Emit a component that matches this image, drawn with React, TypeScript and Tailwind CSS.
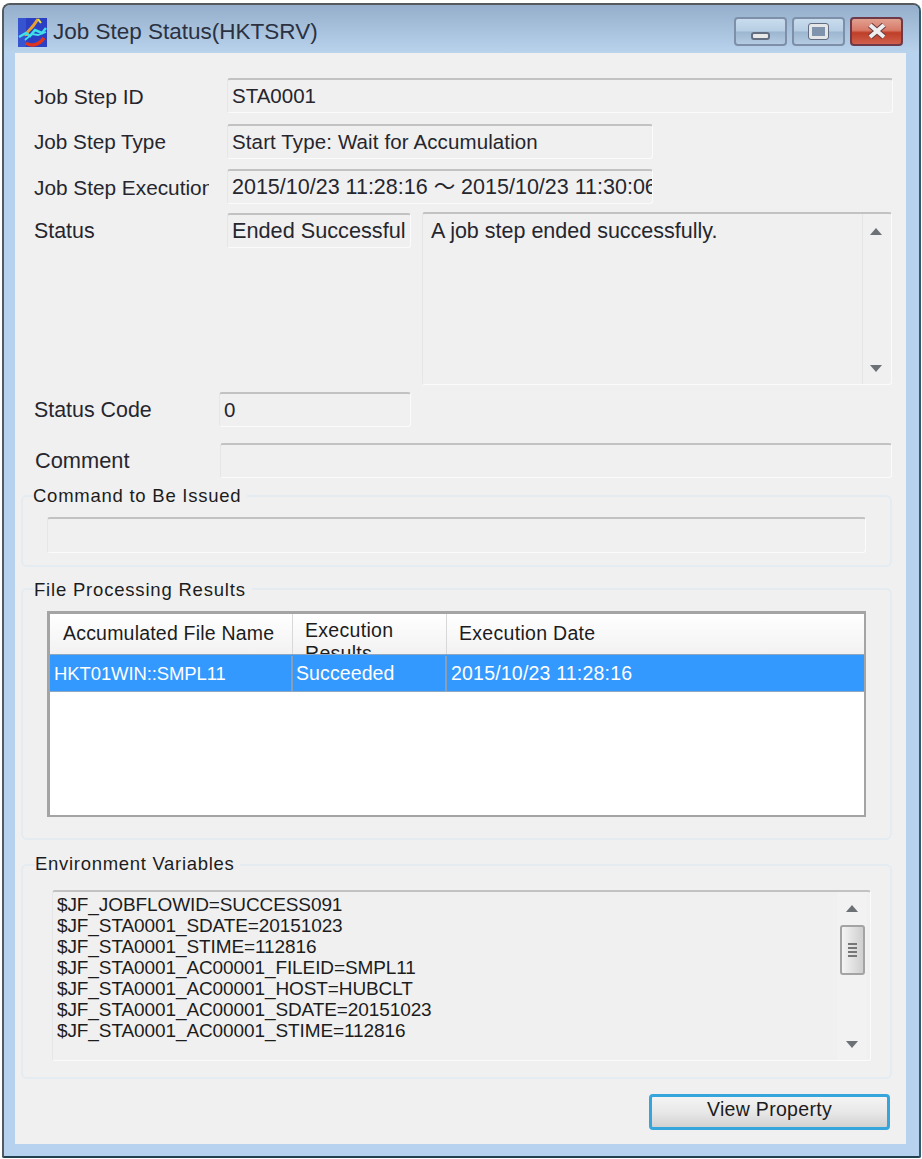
import React from "react";

const sunken = "bg-[#f0f0f0] border border-[#fbfbfb] border-t-2 border-t-[#c2c2c2] border-l-[#e6e6e6] rounded-[3px]";

function Field({ className = "", children }: { className?: string; children?: React.ReactNode }) {
  return (
    <div className={`${sunken} h-[35px] pl-[4px] pt-[1px] flex items-center overflow-hidden whitespace-nowrap text-[#26262e] ${className}`}>
      {children}
    </div>
  );
}

function Label({ className = "", children }: { className?: string; children: React.ReactNode }) {
  return <div className={`overflow-hidden whitespace-nowrap text-[#26262e] ${className}`}>{children}</div>;
}

function Arrow({ up }: { up?: boolean }) {
  return (
    <svg width="12" height="7" viewBox="0 0 12 7" className="block">
      <path d={up ? "M6 0 L12 7 L0 7 Z" : "M0 0 L12 0 L6 7 Z"} fill="#555a60" opacity="0.85" />
    </svg>
  );
}

function Group({ title, className = "", legendClass = "", children }: { title: string; className?: string; legendClass?: string; children: React.ReactNode }) {
  return (
    <fieldset className={`border-2 border-[#e4ebf1] rounded-[6px] ml-[6px] w-[871px] ${className}`}>
      <legend className={`pr-[6px] text-[18.5px] leading-[20px] text-[#1c1c1c] ${legendClass}`}>{title}</legend>
      {children}
    </fieldset>
  );
}

function CaptionButton({ className, children }: { className: string; children: React.ReactNode }) {
  return (
    <div className={`w-[53px] h-[29px] rounded-[4px] border-2 flex items-center justify-center ${className}`}>
      {children}
    </div>
  );
}

const blueBtn = "border-[#7d90a8] bg-[linear-gradient(to_bottom,#c9dcee_0%,#b7cde3_48%,#9db6cf_52%,#b4cbe3_100%)]";

export default function App() {
  const env = [
    "$JF_JOBFLOWID=SUCCESS091",
    "$JF_STA0001_SDATE=20151023",
    "$JF_STA0001_STIME=112816",
    "$JF_STA0001_AC00001_FILEID=SMPL11",
    "$JF_STA0001_AC00001_HOST=HUBCLT",
    "$JF_STA0001_AC00001_SDATE=20151023",
    "$JF_STA0001_AC00001_STIME=112816",
  ];
  return (
    <div className="w-[922px] h-[1159px] bg-white pt-[3px] pl-[2px] font-['Liberation_Sans','Noto_Sans_CJK_JP',Arial,sans-serif]">
      <div className="w-[919px] h-[1155px] rounded-t-[8px] rounded-b-[2px] border-2 border-[#555a5e] border-b-[#23404f] border-r-[#2f5b6a] bg-[#b7d2ee] flex flex-col">
        {/* Title bar */}
        <div className="h-[48px] shrink-0 rounded-t-[6px] bg-gradient-to-b from-[#95aecb] to-[#b9d3ed] flex items-center pl-[14px] pr-[11px] pt-[6px]">
          <svg width="29" height="29" viewBox="0 0 29 29" className="block shrink-0">
            <rect width="29" height="29" fill="#2a3fc4" />
            <rect x="0" y="0" width="8" height="29" fill="#3f62d8" opacity="0.6" />
            <path d="M8 25 C13 29 21 27 26 20" stroke="#e0341e" strokeWidth="3.5" fill="none" />
            <path d="M20 1 L15 8 C12 12 8 14 8 18" stroke="#e8a030" strokeWidth="3" fill="none" />
            <path d="M20 1 L23 5" stroke="#e8e040" strokeWidth="2" fill="none" />
            <path d="M1 19 L8 15 L12 18 L17 12 L24 15 L28 10" stroke="#3fe0e8" strokeWidth="2.5" fill="none" />
            <path d="M7 22 L14 16 L20 17 L28 14" stroke="#3fe0e8" strokeWidth="1.8" fill="none" />
          </svg>
          <div className="ml-[6px] text-[22.5px] text-[#2b3140] whitespace-nowrap">Job Step Status(HKTSRV)</div>
          <div className="ml-auto flex gap-[5px] mr-[5px] -mt-[2px]">
            <CaptionButton className={blueBtn}>
              <div className="w-[19px] h-[8px] mt-[9px] rounded-[3px] bg-[#e8e8e8] border-2 border-[#626e80]" />
            </CaptionButton>
            <CaptionButton className={blueBtn}>
              <div className="w-[19px] h-[15px] rounded-[2px] bg-[#7f93ad] border-[3px] border-[#e4e6e8] outline outline-1 outline-[#626e80]" />
            </CaptionButton>
            <CaptionButton className="border-[#6e3a48] bg-[linear-gradient(to_bottom,#e2a090_0%,#d87a68_45%,#bf3e28_55%,#d0604c_100%)]">
              <svg width="22" height="16" viewBox="0 0 22 16" className="block">
                <path d="M4 2 L18 14 M18 2 L4 14" stroke="#6a3a40" strokeWidth="6" />
                <path d="M4 2 L18 14 M18 2 L4 14" stroke="#eeeeee" strokeWidth="4" />
              </svg>
            </CaptionButton>
          </div>
        </div>

        {/* Client area */}
        <div className="ml-[11px] w-[891px] h-[1091px] bg-[#f0f0f0] flex flex-col">
          <div className="flex items-center mt-[25px] pl-[19px]">
            <Label className="w-[193px] text-[21px] pt-[3px]">Job Step ID</Label>
            <Field className="w-[666px] text-[20.5px]">STA0001</Field>
          </div>
          <div className="flex items-center mt-[11px] pl-[19px]">
            <Label className="w-[193px] text-[20.7px] pt-[1px]">Job Step Type</Label>
            <Field className="w-[426px] text-[20.5px] tracking-[0.12px]">Start Type: Wait for Accumulation</Field>
          </div>
          <div className="flex items-center mt-[10px] pl-[19px]">
            <Label className="w-[175px] mr-[18px] text-[20.8px] pt-[3px]">Job Step Execution Date</Label>
            <Field className="w-[426px] text-[21.5px]">2015/10/23 11:28:16 ～ 2015/10/23 11:30:06</Field>
          </div>
          <div className="flex items-start mt-[8px] pl-[19px]">
            <Label className="w-[193px] mt-[3px] text-[21.4px]">Status</Label>
            <Field className="w-[184px] mt-[1px] text-[21.7px]">Ended Successful</Field>
            <div className={`${sunken} ml-[11px] w-[470px] h-[173px] flex justify-between`}>
              <div className="pl-[8px] pt-[2px] text-[21.5px] leading-[30px] text-[#26262e]">A job step ended successfully.</div>
              <div className="w-[26px] mr-[3px] border-l border-[#e6e6e6] flex flex-col items-center justify-between pt-[14px] pb-[12px]">
                <Arrow up />
                <Arrow />
              </div>
            </div>
          </div>
          <div className="flex items-center mt-[7px] pl-[19px]">
            <Label className="w-[185px] text-[21.4px] pt-[1px]">Status Code</Label>
            <Field className="w-[192px] text-[20.5px]">0</Field>
          </div>
          <div className="flex items-center mt-[16px] pl-[20px]">
            <Label className="w-[185px] text-[21.8px] pt-[1px]">Comment</Label>
            <Field className="w-[672px]" />
          </div>

          <Group title="Command to Be Issued" legendClass="ml-[10px] tracking-[0.75px]" className="mt-[8px] h-[81px]">
            <div className={`${sunken} ml-[24px] mt-[11px] w-[819px] h-[36px]`} />
          </Group>

          <Group title="File Processing Results" legendClass="ml-[11px] tracking-[0.8px] pt-[2px]" className="mt-[11px] h-[262px]">
            <div className="ml-[24px] mt-[11px] w-[819px] h-[206px] bg-white border-[3px] border-[#a4a4a4] border-b-2 border-r-2 text-[#1c1c1c]">
              <div className="flex h-[40px] bg-gradient-to-b from-white to-[#f2f2f2] text-[19.5px] overflow-hidden">
                <div className="w-[243px] h-full pl-[13px] flex items-center border-r border-[#d8d8d8] whitespace-nowrap tracking-[0.2px]">Accumulated File Name</div>
                <div className="w-[154px] h-full pl-[12px] pt-[5px] leading-[23px] border-r border-[#d8d8d8] overflow-hidden tracking-[0.3px]">Execution Results</div>
                <div className="flex-1 pl-[12px] flex items-center whitespace-nowrap tracking-[0.3px]">Execution Date</div>
              </div>
              <div className="flex h-[38px] bg-[#3399ff] text-white text-[19.5px] border-y border-[#8fa7bf] pt-[1px]">
                <div className="w-[243px] pl-[4px] flex items-center border-r-2 border-[#8a9fb5] whitespace-nowrap text-[18.5px] tracking-[-0.1px]">HKT01WIN::SMPL11</div>
                <div className="w-[154px] pl-[3px] flex items-center border-r-2 border-[#8a9fb5] whitespace-nowrap tracking-[0.1px]">Succeeded</div>
                <div className="flex-1 pl-[4px] flex items-center whitespace-nowrap tracking-[0.2px]">2015/10/23 11:28:16</div>
              </div>
            </div>
          </Group>

          <Group title="Environment Variables" legendClass="ml-[12px] tracking-[0.7px] -translate-y-[1px]" className="mt-[15px] h-[224px]">
            <div className={`${sunken} ml-[29px] mt-[15px] w-[819px] h-[171px] flex justify-between`}>
              <div className="pl-[4px] pt-[2px] text-[19px] leading-[21px] tracking-[-0.1px] text-[#1c1c1c]">
                {env.map((l) => (
                  <div key={l} className="whitespace-nowrap">{l}</div>
                ))}
              </div>
              <div className="w-[30px] flex flex-col items-center pt-[13px] pb-[12px] mr-[3px] bg-[#f2f2f2]">
                <Arrow up />
                <div className="mt-[13px] w-[25px] h-[50px] rounded-[3px] border-2 border-[#a4a4a4] bg-gradient-to-r from-[#f4f4f4] to-[#cfcfcf] flex flex-col items-center justify-center gap-[2px]">
                  <div className="w-[9px] h-[2px] bg-[#777]" />
                  <div className="w-[9px] h-[2px] bg-[#777]" />
                  <div className="w-[9px] h-[2px] bg-[#777]" />
                  <div className="w-[9px] h-[2px] bg-[#777]" />
                </div>
                <div className="mt-auto"><Arrow /></div>
              </div>
            </div>
          </Group>

          <div className="flex justify-end mt-[15px] pr-[16px]">
            <div className="w-[241px] h-[36px] pb-[5px] rounded-[4px] border-[3px] border-[#35a5dc] bg-gradient-to-b from-[#f4f4f4] via-[#e8e8e8] to-[#d2d2d2] flex items-center justify-center text-[19.5px] tracking-[0.3px] text-[#1c1c1c]">
              View Property
            </div>
          </div>
        </div>
      </div>
    </div>
  );
}
